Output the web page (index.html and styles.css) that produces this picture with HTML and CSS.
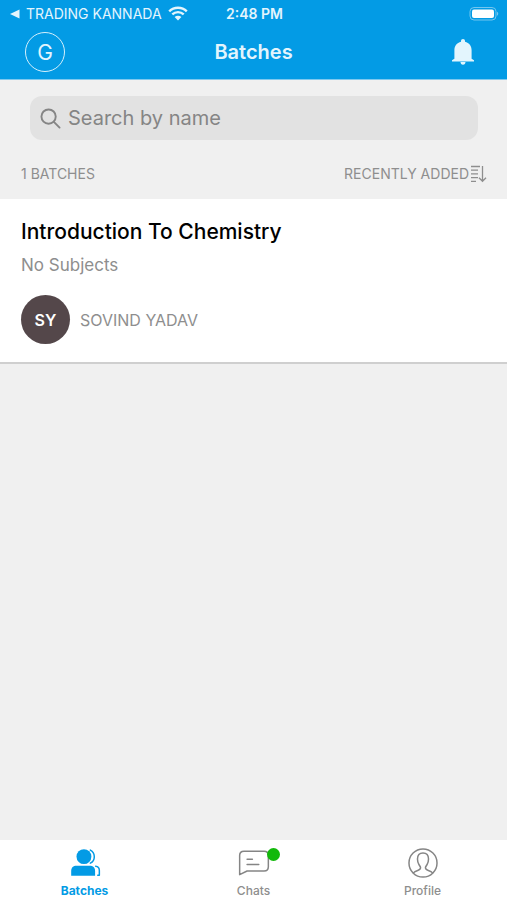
FILE: index.html
```html
<!DOCTYPE html>
<html lang="en">
<head>
<meta charset="utf-8">
<meta name="viewport" content="width=device-width, initial-scale=1">
<title>Batches</title>
<link rel="stylesheet" href="styles.css">
</head>
<body>
<header class="header">
  <div class="status">
    <div class="status-left">
      <svg class="back-icon" viewBox="0 0 10 10" aria-hidden="true"><path d="M0 5 9.5 0.5v9z"/></svg>
      <span>TRADING KANNADA</span>
      <svg class="wifi-icon" viewBox="0 0 20 15" aria-hidden="true">
        <path d="M1.2 5.3a12.6 12.6 0 0 1 17.6 0M4.3 8.4a8.2 8.2 0 0 1 11.4 0"/>
        <path class="solid" d="M10 14.5 6.6 11a4.9 4.9 0 0 1 6.8 0z"/>
      </svg>
    </div>
    <time class="status-time">2:48 PM</time>
    <svg class="battery-icon" viewBox="0 0 30 14" aria-hidden="true">
      <rect class="shell" x="1" y="0.5" width="26" height="12.5" rx="4"/>
      <rect x="3" y="2.500" width="22" height="8.500" rx="2"/>
      <path class="tip" d="M28 4.800a2.200 2.200 0 0 1 0 4z"/>
    </svg>
  </div>
  <div class="navbar">
    <button class="account" type="button" aria-label="Account">G</button>
    <h1 class="title">Batches</h1>
    <button class="bell" type="button" aria-label="Notifications">
      <svg viewBox="0 0 24 28" aria-hidden="true"><path d="M12 1c1.200 0 2 .8 2 2v.8c4.200 1 6.600 4.200 6.600 8.400v8.600l2.400 1.500V23.500H1v-1.200l2.400-1.500v-8.600C3.400 8 5.800 4.800 10 3.800V3c0-1.200.8-2 2-2zM9.500 24h5c0 1.600-1 2.700-2.500 2.700S9.500 25.600 9.500 24z"/></svg>
    </button>
  </div>
</header>
<main class="main">
  <label class="search">
    <svg class="search-icon" viewBox="0 0 22 22" aria-hidden="true"><circle cx="9" cy="9" r="7.500"/><path d="m14.500 14.500 6 6"/></svg>
    <input type="search" placeholder="Search by name" aria-label="Search by name">
  </label>
  <div class="toolbar">
    <span>1 BATCHES</span>
    <button class="sort" type="button">RECENTLY ADDED<svg viewBox="0 0 17 18" aria-hidden="true"><path d="M1 1.500h9M1 5.200h7M1 8.900h7M1 12.600h7M1 16.300h5M12.500 1v15M9 12.800l3.500 3.500 3.500-3.500"/></svg></button>
  </div>
  <article class="card">
    <h2 class="card-title">Introduction To Chemistry</h2>
    <p class="subjects">No Subjects</p>
    <div class="teacher">
      <span class="avatar">SY</span>
      <span class="teacher-name">SOVIND YADAV</span>
    </div>
  </article>
</main>
<nav class="tabs">
  <a class="tab active" href="#batches">
    <svg viewBox="0 0 32 28" aria-hidden="true">
      <circle class="fill" cx="15" cy="8" r="7"/>
      <path class="fill" d="M3 26v-4.500c0-3.500 2-5 5-5h12.500c3 0 5 1.500 5 5V26z"/>
      <path d="M21 1.800a7 7 0 0 1 0 12.400M26 17c2.200.2 3.500 1.500 3.500 4V25.500H28"/>
    </svg>
    <span>Batches</span>
  </a>
  <a class="tab" href="#chats">
    <span class="icon-wrap">
      <svg viewBox="0 0 32 28" aria-hidden="true"><path d="M2.500 25V7c0-2.500 1.500-4 4-4h19c2.500 0 4 1.500 4 4v10.500c0 2.500-1.500 4-4 4H9.500zM9.500 10.500h5M9.500 15.500h11"/></svg>
      <i class="dot"></i>
    </span>
    <span>Chats</span>
  </a>
  <a class="tab" href="#profile">
    <svg viewBox="0 0 32 28" aria-hidden="true">
      <circle cx="16" cy="14" r="13.200"/>
      <path d="M7 23.300c1-1.300 2.500-1.800 4-2.300 2-.7 2.700-1.100 2.700-2.500 0-1.200-.9-1.800-1.600-3.200-.7-1.300-1.300-2.800-1.300-5 0-3.600 2-5.800 5.200-5.800s5.200 2.200 5.200 5.800c0 2.200-.6 3.700-1.300 5-.7 1.400-1.600 2-1.600 3.200 0 1.400.7 1.800 2.700 2.500 1.500.5 3 1 4 2.300"/>
    </svg>
    <span>Profile</span>
  </a>
</nav>
</body>
</html>
```
FILE: styles.css
```css
* { box-sizing: border-box; }

body {
  margin: 0;
  min-height: 100vh;
  display: flex;
  flex-direction: column;
  background: #f0f0f0;
  color: #8e8e8e;
  font-family: Inter, "Liberation Sans", sans-serif;
  font-size: 14px;
}

button {
  padding: 0;
  border: 0;
  background: none;
  color: inherit;
  font: inherit;
}

h1, h2, p { margin: 0; }

.header {
  background: #039be5;
  border-bottom: 1px solid #7fc9ef;
  color: #e3f5fd;
}

.status {
  height: 27px;
  padding: 0 8px 0 10px;
  display: grid;
  grid-template-columns: 1fr auto 1fr;
  align-items: center;
}

.status-left { display: flex; align-items: center; gap: 6px; white-space: nowrap; }
.back-icon { width: 10px; height: 10px; fill: #e3f5fd; }
.wifi-icon { width: 20px; height: 15px; fill: none; stroke: #e3f5fd; stroke-width: 2.4; }
.wifi-icon .solid { fill: #e3f5fd; stroke: none; }
.status-time { font-weight: 600; }
.battery-icon { width: 30px; height: 14px; justify-self: end; fill: #fff; }
.battery-icon .shell { fill: none; stroke: #73c6ef; }
.battery-icon .tip { fill: #73c6ef; }

.navbar {
  height: 52px;
  padding: 0 25px 2px;
  display: grid;
  grid-template-columns: 1fr auto 1fr;
  align-items: center;
}

.account {
  width: 40px;
  height: 40px;
  border: 1px solid #d5f0fc;
  border-radius: 50%;
  font-size: 21px;
}

.title { font-size: 20px; font-weight: 600; }
.bell { justify-self: end; display: flex; padding: 0 7px; }
.bell svg { width: 24px; height: 28px; fill: #e3f5fd; }

.main { flex: 1; }

.search {
  margin: 16px 29px 0 30px;
  height: 44px;
  padding: 0 10px;
  display: flex;
  align-items: center;
  gap: 7px;
  border-radius: 12px;
  background: #e2e2e2;
}

.search-icon { width: 21px; height: 21px; fill: none; stroke: #858585; stroke-width: 2; stroke-linecap: round; }

.search input {
  flex: 1;
  min-width: 0;
  padding: 0;
  border: 0;
  outline: 0;
  background: none;
  color: #444;
  font: inherit;
  font-size: 20px;
}

.search input::placeholder { color: #858585; opacity: 1; }

.toolbar {
  height: 59px;
  padding: 8px 20px 0 21px;
  display: flex;
  align-items: center;
  justify-content: space-between;
}

.sort { display: flex; align-items: center; gap: 1px; }
.sort svg { width: 17px; height: 18px; fill: none; stroke: #8e8e8e; stroke-width: 1.3; }

.card {
  padding: 20px 21px 18px;
  background: #fff;
  border-bottom: 2px solid #cfcfcf;
}

.card-title { color: #000; font-size: 21px; line-height: 26px; font-weight: 500; }
.subjects { margin-top: 10px; font-size: 17px; line-height: 20px; }
.teacher { margin-top: 20px; display: flex; align-items: center; gap: 10px; font-size: 16px; }

.avatar {
  width: 49px;
  height: 49px;
  display: grid;
  place-items: center;
  border-radius: 50%;
  background: #54474a;
  color: #fff;
  font-weight: 600;
}

.tabs {
  height: 60px;
  display: grid;
  grid-template-columns: repeat(3, 1fr);
  background: #fff;
}

.tab {
  padding-top: 8px;
  display: flex;
  flex-direction: column;
  align-items: center;
  gap: 5px;
  color: #8e8e8e;
  font-size: 12px;
  line-height: 15px;
  font-weight: 500;
  text-decoration: none;
}

.tab svg { display: block; width: 34px; height: 30px; fill: none; stroke: #858585; stroke-width: 1.4; stroke-linejoin: round; stroke-linecap: round; }
.tab.active { color: #039be5; font-weight: 700; }
.tab.active svg { stroke: #039be5; }
.tab.active .fill { fill: #039be5; stroke: none; }
.icon-wrap { position: relative; }

.dot {
  position: absolute;
  top: 0;
  right: -9px;
  width: 13px;
  height: 13px;
  border-radius: 50%;
  background: #12b90b;
}
```
